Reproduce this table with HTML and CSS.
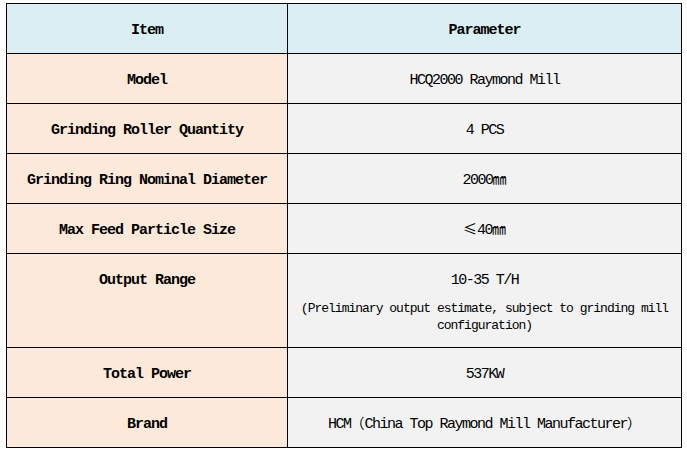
FILE: index.html
```html
<!DOCTYPE html>
<html>
<head>
<meta charset="utf-8">
<link rel="stylesheet" href="styles.css">
</head>
<body>
<table class="spec">
  <colgroup><col class="c1"><col class="c2"></colgroup>
  <thead>
    <tr><th class="head">Item</th><th class="head">Parameter</th></tr>
  </thead>
  <tbody>
    <tr><th>Model</th><td>HCQ2000 Raymond Mill</td></tr>
    <tr><th>Grinding Roller Quantity</th><td>4 PCS</td></tr>
    <tr><th>Grinding Ring Nominal Diameter</th><td>2000<span class="cjk">㎜</span></td></tr>
    <tr><th>Max Feed Particle Size</th><td><span class="cjk">≤</span>40<span class="cjk">㎜</span></td></tr>
    <tr><th>Output Range</th><td>10-35 T/H<p class="note">(Preliminary output estimate, subject to grinding mill configuration)</p></td></tr>
    <tr><th>Total Power</th><td>537KW</td></tr>
    <tr><th>Brand</th><td>HCM<span class="cjk">（</span>China Top Raymond Mill Manufacturer<span class="cjk">）</span></td></tr>
  </tbody>
</table>
</body>
</html>
```

FILE: styles.css
```css
html, body {
  margin: 0;
  padding: 0;
  background: #ffffff;
}
body {
  padding: 3px 0 0 6px;
  font-family: "Liberation Mono", "Noto Sans CJK SC", monospace;
  color: #000;
}
.spec {
  border-collapse: collapse;
  width: 675px;
  table-layout: fixed;
}
.c1 { width: 281px; }
.c2 { width: 394px; }
.spec th, .spec td {
  border: 1px solid #000;
  padding: 17px 8px 13px;
  line-height: 19px;
  height: 19px;
  text-align: center;
  vertical-align: top;
}
.spec th {
  background: #fde9d9;
  font-size: 15px;
  font-weight: bold;
  letter-spacing: -1px;
}
.spec td {
  background: #f2f2f2;
  font-size: 15px;
  font-weight: normal;
  letter-spacing: -1.5px;
}
.spec th.head {
  background: #daeef3;
}
.cjk {
  font-family: "Noto Sans CJK SC", sans-serif;
  letter-spacing: 0;
  font-size: 14px;
  line-height: 1px;
}
.note {
  margin: 10px 0 0;
  font-size: 13px;
  line-height: 17px;
  letter-spacing: -1px;
}
```
